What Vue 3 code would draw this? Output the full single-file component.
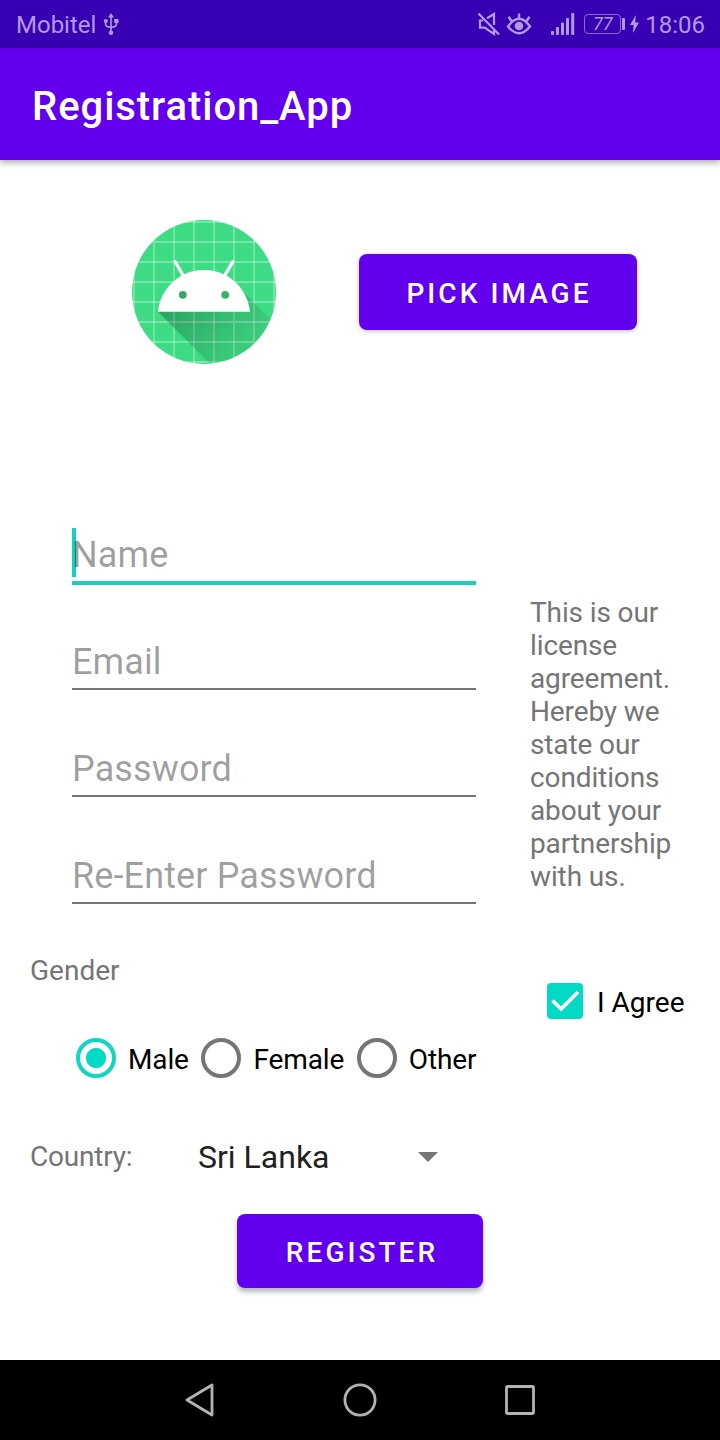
<script setup>
const fields = [
  { label: 'Name', active: true },
  { label: 'Email' },
  { label: 'Password' },
  { label: 'Re-Enter Password' },
]
const genders = ['Male', 'Female', 'Other']
const selected = 'Male'
const gridLines = [19, 29, 39, 49, 59, 69, 79, 89]
</script>

<template>
  <div class="screen">
    <header class="status">
      <span class="carrier">Mobitel</span>
      <svg class="usb" width="16" height="24" viewBox="0 0 16 24">
        <g fill="none" stroke="currentColor" stroke-width="1.6">
          <path d="M8 4v16M2.6 9v3.2q0 2.6 5.4 3.2M13.4 9v3.2q0 2.6-5.4 3.2" />
        </g>
        <path d="M8 1l3 4.5H5z" fill="currentColor" />
        <circle cx="2.8" cy="9" r="2.1" fill="currentColor" />
        <path d="M11.3 7h4.2v4h-4.2z" fill="currentColor" />
        <circle cx="8" cy="20.8" r="2.3" fill="currentColor" />
      </svg>
      <span class="spacer"></span>
      <svg class="mute" width="24" height="24" viewBox="0 0 24 24" fill="none" stroke="currentColor" stroke-width="2.2">
        <path d="M1.5 1.5l20.5 21M6 8.500H3v7.200h4.600l9.400 6.300v-5M10 6.300L17 2v11" />
      </svg>
      <svg class="eye" width="26" height="24" viewBox="0 0 26 24" fill="none" stroke="currentColor" stroke-width="2.400">
        <path d="M2 14.500Q13-1 24 14.500Q13 28 2 14.500zM13 6.500V1.500M5.500 9L2.500 4.800M20.500 9l3-4.200" />
        <circle cx="13" cy="14" r="4.300" fill="currentColor" stroke="none" />
      </svg>
      <svg class="signal" width="24" height="24" viewBox="0 0 24 24" fill="currentColor">
        <rect x="0" y="18" width="3" height="4" rx="1" />
        <rect x="5" y="14" width="3" height="8" rx="1" />
        <rect x="10" y="9.500" width="3" height="12.500" rx="1" />
        <rect x="15" y="5" width="3" height="17" rx="1" />
        <rect x="20.200" y="0" width="3" height="22" rx="1" />
      </svg>
      <span class="battery">77</span>
      <span class="battery-tip"></span>
      <svg class="bolt" width="9" height="18" viewBox="0 0 9 18">
        <path d="M5.800 0L0 10h3.600L2.800 18 9 7.500H5.200z" fill="currentColor" />
      </svg>
      <span class="clock">18:06</span>
    </header>

    <div class="appbar"><h1>Registration_App</h1></div>

    <main>
      <section class="picker">
        <svg class="avatar" width="144" height="144" viewBox="18 18 72 72">
          <defs>
            <clipPath id="round"><circle cx="54" cy="54" r="36" /></clipPath>
            <linearGradient id="shade" gradientUnits="userSpaceOnUse" x1="42.9492" y1="49.598" x2="85.8476" y2="92.4963">
              <stop offset="0" stop-color="#000" stop-opacity=".267" />
              <stop offset="1" stop-color="#000" stop-opacity="0" />
            </linearGradient>
          </defs>
          <g clip-path="url(#round)">
            <path d="M18 18h72v72H18z" fill="#3ddc84" />
            <g stroke="#fff" stroke-opacity=".3" stroke-width=".9">
              <path v-for="n in gridLines" :key="n" :d="`M${n} 18V90M18 ${n}H90`" />
            </g>
            <path d="M31,63.928c0,0 6.4,-11 12.1,-13.1c7.2,-2.6 26,-1.4 26,-1.4l38.1,38.1L107,108.928l-32,-1L31,63.928z" fill="url(#shade)" />
            <path
              fill="#fff"
              fill-rule="evenodd"
              d="M65.3,45.828l3.8,-6.6c0.2,-0.4 0.1,-0.9 -0.3,-1.1c-0.4,-0.2 -0.9,-0.1 -1.1,0.3l-3.9,6.7c-6.3,-2.8 -13.4,-2.8 -19.7,0l-3.9,-6.7c-0.2,-0.4 -0.7,-0.5 -1.1,-0.3C38.8,38.328 38.7,38.828 38.9,39.228l3.8,6.6C36.2,49.428 31.7,56.028 31,63.928h46C76.3,56.028 71.8,49.428 65.3,45.828z"
            />
            <circle cx="43.400" cy="55.400" r="1.950" fill="#32ab68" />
            <circle cx="64.600" cy="55.400" r="1.950" fill="#34b36d" />
          </g>
        </svg>
        <button class="btn pick">PICK IMAGE</button>
      </section>

      <section class="form">
        <div class="fields">
          <div v-for="f in fields" :key="f.label" class="field" :class="{ active: f.active }">
            <span v-if="f.active" class="caret"></span>
            <span class="hint">{{ f.label }}</span>
          </div>
        </div>
        <p class="license">This is our license agreement. Hereby we state our conditions about your partnership with us.</p>
      </section>

      <section class="choices">
        <div class="gender">
          <div class="label">Gender</div>
          <div class="radios">
            <div v-for="g in genders" :key="g" class="radio">
              <span class="ring" :class="{ on: g === selected }"></span>
              <span>{{ g }}</span>
            </div>
          </div>
        </div>
        <div class="agree">
          <svg width="36" height="36" viewBox="0 0 36 36">
            <rect width="36" height="36" rx="4" fill="#03dac5" />
            <path d="M5.600 17.600l8.600 8.400L31 9" fill="none" stroke="#fff" stroke-width="3.700" />
          </svg>
          <span>I Agree</span>
        </div>
      </section>

      <section class="country">
        <span class="label">Country:</span>
        <span class="value">Sri Lanka</span>
        <span class="arrow"></span>
      </section>

      <button class="btn register">REGISTER</button>
    </main>

    <nav>
      <svg width="32" height="36" viewBox="0 0 32 36"><path d="M28 3v30L3 18z" /></svg>
      <svg width="36" height="36" viewBox="0 0 36 36"><circle cx="18" cy="18" r="15.100" /></svg>
      <svg width="32" height="36" viewBox="0 0 32 36"><rect x="2.500" y="4.500" width="27" height="27" rx="1" /></svg>
    </nav>
  </div>
</template>

<style>
body {
  margin: 0;
  background: #fff;
}
</style>

<style scoped>
.screen {
  width: 720px;
  height: 1440px;
  display: flex;
  flex-direction: column;
  background: #fff;
  font-family: Roboto, "Liberation Sans", sans-serif;
  font-size: 28px;
  line-height: 33px;
  color: #000;
  overflow: hidden;
}
.status {
  height: 48px;
  box-sizing: border-box;
  padding: 0 15px 0 16px;
  display: flex;
  align-items: center;
  background: #3700b3;
  color: #b19ae3;
  font-size: 24px;
}
.carrier { margin-top: 2px; }
.usb { margin-left: 7px; }
.spacer { flex: 1; }
.eye { margin-left: 5px; }
.signal { margin: 2px 0 0 19px; }
.battery {
  width: 37px;
  height: 20px;
  box-sizing: border-box;
  margin-left: 9px;
  border: 1.500px solid #8a69d3;
  border-radius: 4px;
  font-size: 18px;
  line-height: 18px;
  font-style: italic;
  text-align: center;
}
.battery-tip {
  width: 3px;
  height: 12px;
  margin-left: 1px;
  border-radius: 1px;
  background: currentColor;
}
.bolt { margin: 0 6px 0 5px; }
.clock { margin-top: 2px; }
.appbar {
  height: 112px;
  flex: none;
  display: flex;
  align-items: center;
  padding-left: 32px;
  background: #6200ee;
  box-shadow: 0 2px 7px rgba(0, 0, 0, 0.38);
}
h1 {
  margin: 6px 0 0;
  font-size: 40px;
  line-height: 48px;
  font-weight: 500;
  color: #fff;
  letter-spacing: 0.950px;
}
main {
  height: 1200px;
  display: flex;
  flex-direction: column;
}
.picker {
  display: flex;
  align-items: center;
  padding: 60px 0 0 132px;
}
.btn {
  border: 0;
  padding: 2px 0 0 2px;
  border-radius: 8px;
  background: #6200ee;
  color: #fff;
  font: 500 28px/33px Roboto, "Liberation Sans", sans-serif;
  letter-spacing: 3.050px;
}
.pick {
  width: 278px;
  height: 76px;
  margin-left: 83px;
  box-shadow: 0 1px 4px rgba(0, 0, 0, 0.28);
}
.form {
  display: flex;
  padding: 112px 0 0 72px;
}
.fields { width: 404px; }
.field {
  position: relative;
  height: 107px;
  box-sizing: border-box;
  padding-top: 58px;
  border-bottom: 2px solid #757575;
  font-size: 36px;
  line-height: 42px;
  letter-spacing: 0.120px;
}
.field.active {
  height: 109px;
  border-bottom: 4px solid #1bcfbd;
}
.field.active + .field {
  height: 105px;
  padding-top: 56px;
}
.hint {
  position: relative;
  color: rgba(0, 0, 0, 0.38);
}
.caret {
  position: absolute;
  left: 0;
  top: 52px;
  width: 4px;
  height: 49px;
  background: #14d0bf;
}
.license {
  width: 160px;
  margin: 120px 0 0 54px;
  color: #757575;
  letter-spacing: -0.120px;
}
.label { color: #757575; }
.choices {
  display: flex;
  padding-left: 30px;
}
.gender {
  width: 517px;
  padding-top: 50px;
}
.radios {
  display: flex;
  padding: 51px 0 0 46px;
}
.radio {
  display: flex;
  align-items: center;
  gap: 12px;
  margin-right: 12.600px;
  letter-spacing: -0.120px;
}
.radio > span:last-child { margin-top: 3px; }
.ring {
  width: 40px;
  height: 40px;
  box-sizing: border-box;
  border: 4px solid #757575;
  border-radius: 50%;
}
.ring.on {
  border-color: #12d5c2;
  background: radial-gradient(circle, #03dac5 9.600px, transparent 10.400px);
}
.agree {
  display: flex;
  align-items: center;
  height: 36px;
  gap: 14px;
  margin-top: 79px;
}
.agree span { margin-top: 3px; }
.country {
  display: flex;
  align-items: center;
  height: 38px;
  padding: 60px 0 0 30px;
}
.country .label {
  width: 168px;
  margin-top: -2px;
  letter-spacing: -0.220px;
}
.value {
  width: 220px;
  font-size: 32px;
  line-height: 38px;
  color: #212121;
}
.arrow {
  border: 10px solid transparent;
  border-top-color: #757575;
  border-bottom: 0;
}
.register {
  width: 246px;
  height: 74px;
  margin: 38px 0 0 237px;
  padding-left: 4px;
  box-shadow: 0 4px 5px rgba(0, 0, 0, 0.28);
}
nav {
  height: 80px;
  flex: none;
  display: flex;
  align-items: center;
  justify-content: center;
  gap: 126px;
  background: #000;
}
nav svg {
  fill: none;
  stroke: #b3b3b3;
  stroke-width: 2.800;
  stroke-linejoin: round;
}
</style>
